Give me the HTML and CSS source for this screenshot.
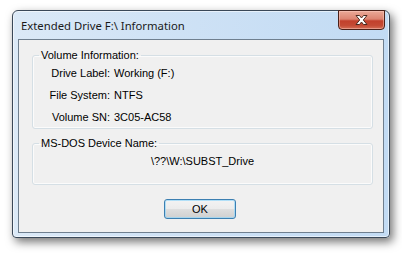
FILE: index.html
```html
<!DOCTYPE html>
<html>
<head>
<meta charset="utf-8">
<title>Extended Drive F:\ Information</title>
<link rel="stylesheet" href="styles.css">
</head>
<body>
<div class="window">
  <div class="titlebar">
    <span class="title">Extended Drive F:\ Information</span>
  </div>
  <div class="close" role="button" aria-label="Close">
    <svg width="15" height="12" viewBox="0 0 15 12">
      <path d="M2 1.5 L5.5 1.5 L7.5 4 L9.5 1.5 L13 1.5 L9.3 6 L13 10.5 L9.5 10.5 L7.5 8 L5.5 10.5 L2 10.5 L5.7 6 Z" fill="#ffffff" stroke="#4a2a20" stroke-width="1" stroke-linejoin="round"/>
    </svg>
  </div>
  <div class="client">
    <fieldset class="group group-volume">
      <legend>Volume Information:</legend>
      <div class="props">
        <span class="key">Drive Label:</span><span class="val">Working (F:)</span>
        <span class="key">File System:</span><span class="val">NTFS</span>
        <span class="key">Volume SN:</span><span class="val">3C05-AC58</span>
      </div>
    </fieldset>
    <fieldset class="group group-dos">
      <legend>MS-DOS Device Name:</legend>
      <div class="device">\??\W:\SUBST_Drive</div>
    </fieldset>
    <div class="actions">
      <button class="ok">OK</button>
    </div>
  </div>
</div>
</body>
</html>
```
FILE: styles.css
```css
html, body {
  margin: 0;
  padding: 0;
  background: #ffffff;
}
body {
  width: 402px;
  height: 253px;
  overflow: hidden;
  font-family: "Liberation Sans", Arial, sans-serif;
}
.window {
  position: relative;
  box-sizing: border-box;
  margin: 10px 0 0 12px;
  width: 378px;
  height: 228px;
  border: 1px solid #3a4858;
  border-radius: 6px 6px 4px 4px;
  background: linear-gradient(90deg, #dbe9f7 0%, #cfe2f5 40%, #c2dbf4 100%);
  box-shadow: 3px 4px 10px rgba(0, 0, 0, 0.55), inset 0 0 0 1px rgba(255, 255, 255, 0.55);
  padding: 0 5px 4px 5px;
}
.titlebar {
  height: 28px;
  display: flex;
  align-items: center;
  padding-left: 3px;
}
.title {
  font-family: "Noto Sans", "Open Sans", sans-serif;
  font-size: 11.3px;
  color: #1a1a1a;
  line-height: 14px;
  padding-top: 1px;
}
.close {
  position: absolute;
  top: -1px;
  right: 4px;
  box-sizing: border-box;
  width: 47px;
  height: 20px;
  border: 1px solid #4a2018;
  border-radius: 0 0 4px 4px;
  background: linear-gradient(180deg, #eaa998 0%, #dc8471 45%, #c2402c 55%, #c44a34 80%, #d46e56 100%);
  box-shadow: inset 0 0 0 1px rgba(255, 210, 200, 0.45);
  display: flex;
  align-items: center;
  justify-content: center;
}
.close svg {
  display: block;
}
.client {
  box-sizing: border-box;
  height: 194px;
  border: 1px solid #6f7f8f;
  background: #f0f0f0;
  padding: 9px 10px 0 13px;
  font-size: 11px;
  color: #000000;
}
.group {
  margin: 0;
  border: 1px solid #d5dfe5;
  border-radius: 3px;
  box-shadow: inset 0 0 0 1px rgba(255, 255, 255, 0.7);
  padding: 0 6px;
}
.group legend {
  padding: 0 2px;
  margin-left: 0;
  line-height: 13px;
  font-size: 11px;
}
.group-volume {
  padding-bottom: 0;
}
.props {
  display: grid;
  grid-template-columns: 71px auto;
  column-gap: 4px;
  grid-auto-rows: 22px;
  align-items: center;
}
.key {
  text-align: right;
}
.group-dos {
  margin-top: 8px;
  padding-bottom: 12px;
}
.device {
  height: 22px;
  line-height: 22px;
  text-align: center;
}
.actions {
  display: flex;
  justify-content: center;
  padding-right: 5px;
  margin-top: 14px;
}
.ok {
  width: 72px;
  height: 20px;
  padding: 0;
  border: 1px solid #3c7fb1;
  border-radius: 3px;
  background: linear-gradient(180deg, #f3f3f3 0%, #ececec 48%, #dedede 52%, #d0d0d0 100%);
  box-shadow: inset 0 0 0 1px rgba(150, 215, 250, 0.7);
  font-family: "Liberation Sans", Arial, sans-serif;
  font-size: 11px;
  color: #000000;
}
```
